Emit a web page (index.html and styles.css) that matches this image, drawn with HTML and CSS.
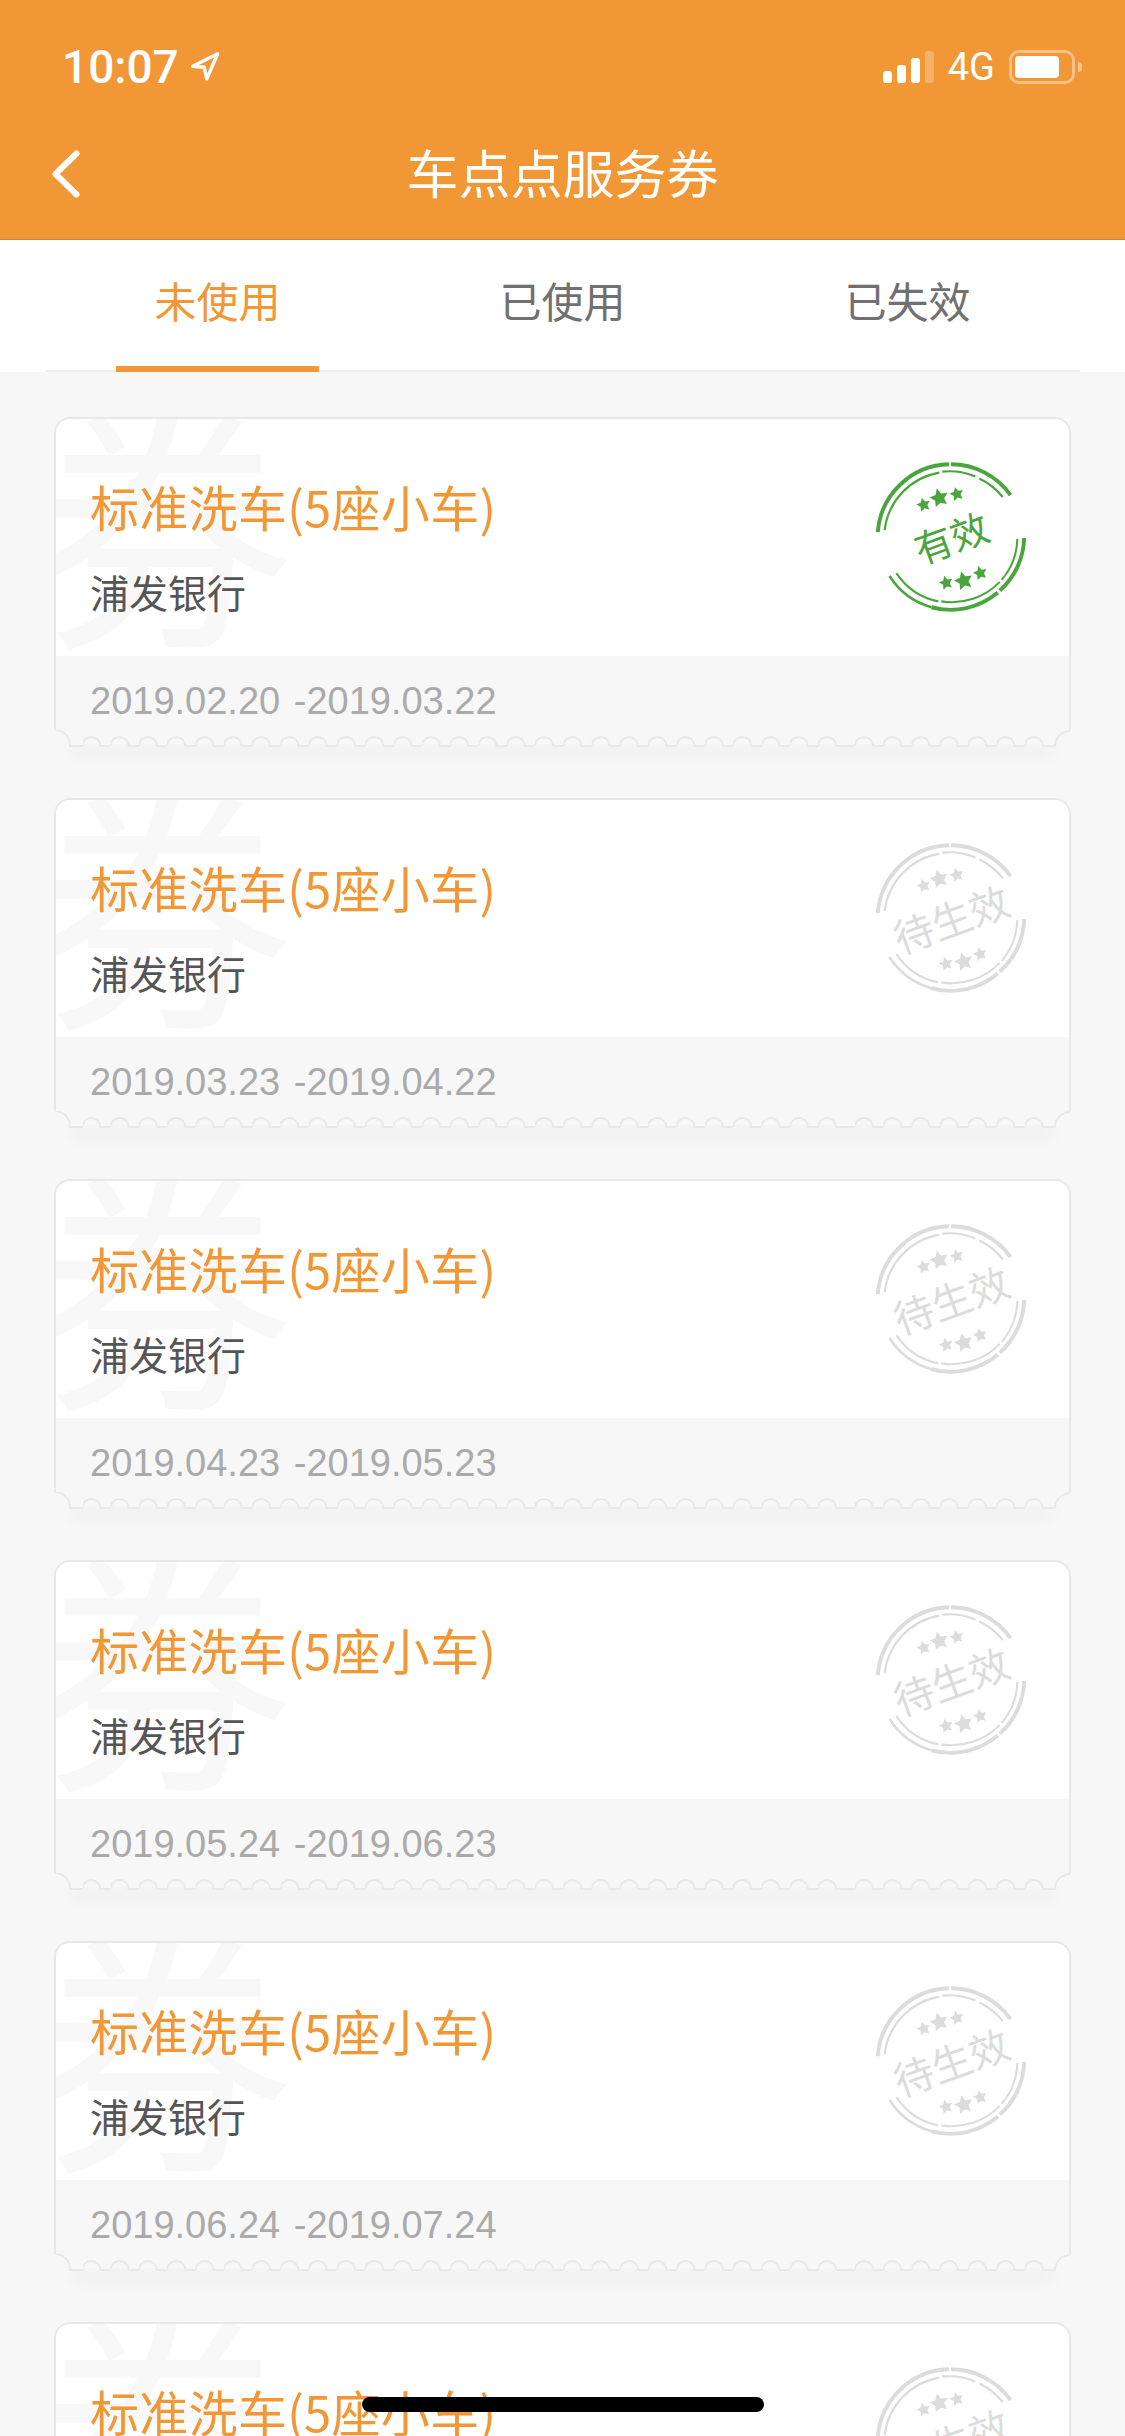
FILE: index.html
```html
<!DOCTYPE html>
<html lang="zh-CN">
<head>
    <meta charset="UTF-8">
    <meta name="viewport" content="width=device-width, initial-scale=1.0">
    <title>车点点服务券</title>
    <link rel="stylesheet" href="styles.css">
</head>
<body>
    <!-- shared drawings: card bottom edge and round stamp -->
    <svg class="defs" width="0" height="0" aria-hidden="true">
        <defs>
            <pattern id="tooth" patternUnits="userSpaceOnUse" width="28.3" height="18">
                <path d="M0 16A9 9 0 0 1 18 16H28.3V0H0Z" fill="#f7f7f7"/>
                <path d="M0 16A9 9 0 0 1 18 16H28.3" fill="none" stroke="#e8e8e8" stroke-width="2"/>
            </pattern>
            <polygon id="star" points="0,-1 .294,-.405 .951,-.309 .476,.155 .588,.809 0,.5 -.588,.809 -.476,.155 -.951,-.309 -.294,-.405"/>
            <symbol id="edge" viewBox="0 0 1017 18">
                <path d="M0 0H2A14 14 0 0 1 16 16H29V0Z" fill="#f7f7f7"/>
                <path d="M1 0A15 15 0 0 1 16 15V16H29" fill="none" stroke="#e8e8e8" stroke-width="2"/>
                <rect x="29" y="0" width="757" height="18" fill="url(#tooth)"/>
                <path d="M786 0H801V16H786Z" fill="#f7f7f7"/>
                <path d="M786 16H801" stroke="#e8e8e8" stroke-width="2"/>
                <g transform="translate(801 0)"><rect width="198.1" height="18" fill="url(#tooth)"/></g>
                <path d="M999 0H1017L1001 16H999Z" fill="#f7f7f7"/>
                <path d="M999 16H1001A15 15 0 0 1 1016 1" fill="none" stroke="#e8e8e8" stroke-width="2"/>
            </symbol>
            <symbol id="stamp" viewBox="-82 -82 164 164">
                <g fill="none" stroke="currentColor">
                    <path stroke-width="4" d="M-75 -5A75 75 0 0 1 -2 -74.500M0 -74.500A75 75 0 0 1 61 -43"/>
                    <path stroke-width="4" d="M75 1A75 75 0 0 1 50 55M48 57A75 75 0 0 1 -20 72"/>
                    <path stroke-width="2.600" d="M-20 72A75 75 0 0 1 -63 40"/>
                    <path stroke-width="2.200" d="M-68 -7A68 68 0 0 1 -12 -66M-9 -67A68 68 0 0 1 25 -62M29 -60A68 68 0 0 1 53 -41"/>
                    <path stroke-width="2.200" d="M68 2A68 68 0 0 1 52 44M50 46A68 68 0 0 1 -10 66M-13 66A68 68 0 0 1 -56 37"/>
                </g>
                <g fill="currentColor">
                    <use href="#star" transform="translate(-28 -33) rotate(-15) scale(7.500)"/>
                    <use href="#star" transform="translate(-12 -40) rotate(-15) scale(10)"/>
                    <use href="#star" transform="translate(6 -44) rotate(-15) scale(7.500)"/>
                    <use href="#star" transform="translate(-5 47) rotate(-15) scale(7.500)"/>
                    <use href="#star" transform="translate(13 45) rotate(-15) scale(10)"/>
                    <use href="#star" transform="translate(30 37) rotate(-15) scale(7.500)"/>
                </g>
            </symbol>
        </defs>
    </svg>

    <header class="app-header">
        <div class="status-bar">
            <div class="status-left">
                <span class="time">10:07</span>
                <svg class="location" viewBox="0 0 30 32"><path d="M27.700 2.700L2.700 15.300L14.300 16.300L16.700 28Z" fill="none" stroke="#fff" stroke-width="3.400" stroke-linejoin="round"/></svg>
            </div>
            <div class="status-right">
                <div class="signal">
                    <i class="bar bar-1"></i>
                    <i class="bar bar-2"></i>
                    <i class="bar bar-3"></i>
                    <i class="bar bar-4"></i>
                </div>
                <span class="network">4G</span>
                <div class="battery"><i class="battery-level"></i></div>
                <i class="battery-cap"></i>
            </div>
        </div>
        <nav class="nav-bar">
            <svg class="back" viewBox="0 0 28 48"><path d="M24.500 3.500L3.500 24L24.500 44.500" fill="none" stroke="#fff" stroke-width="6" stroke-linecap="round" stroke-linejoin="round"/></svg>
            <h1 class="nav-title">车点点服务券</h1>
        </nav>
    </header>

    <div class="tabs-wrap">
        <div class="tabs">
            <div class="tab active">未使用</div>
            <div class="tab">已使用</div>
            <div class="tab">已失效</div>
        </div>
    </div>

    <main class="coupon-list">
        <div class="coupon">
            <div class="coupon-body">
                <span class="watermark">券</span>
                <div class="coupon-info">
                    <div class="coupon-name">标准洗车(5座小车)</div>
                    <div class="coupon-bank">浦发银行</div>
                </div>
                <div class="stamp valid">
                    <svg class="stamp-ring"><use href="#stamp"/></svg>
                    <span class="stamp-text">有效</span>
                </div>
            </div>
            <div class="coupon-date">2019.02.20 -2019.03.22</div>
            <svg class="coupon-edge"><use href="#edge"/></svg>
        </div>

        <div class="coupon">
            <div class="coupon-body">
                <span class="watermark">券</span>
                <div class="coupon-info">
                    <div class="coupon-name">标准洗车(5座小车)</div>
                    <div class="coupon-bank">浦发银行</div>
                </div>
                <div class="stamp pending">
                    <svg class="stamp-ring"><use href="#stamp"/></svg>
                    <span class="stamp-text">待生效</span>
                </div>
            </div>
            <div class="coupon-date">2019.03.23 -2019.04.22</div>
            <svg class="coupon-edge"><use href="#edge"/></svg>
        </div>

        <div class="coupon">
            <div class="coupon-body">
                <span class="watermark">券</span>
                <div class="coupon-info">
                    <div class="coupon-name">标准洗车(5座小车)</div>
                    <div class="coupon-bank">浦发银行</div>
                </div>
                <div class="stamp pending">
                    <svg class="stamp-ring"><use href="#stamp"/></svg>
                    <span class="stamp-text">待生效</span>
                </div>
            </div>
            <div class="coupon-date">2019.04.23 -2019.05.23</div>
            <svg class="coupon-edge"><use href="#edge"/></svg>
        </div>

        <div class="coupon">
            <div class="coupon-body">
                <span class="watermark">券</span>
                <div class="coupon-info">
                    <div class="coupon-name">标准洗车(5座小车)</div>
                    <div class="coupon-bank">浦发银行</div>
                </div>
                <div class="stamp pending">
                    <svg class="stamp-ring"><use href="#stamp"/></svg>
                    <span class="stamp-text">待生效</span>
                </div>
            </div>
            <div class="coupon-date">2019.05.24 -2019.06.23</div>
            <svg class="coupon-edge"><use href="#edge"/></svg>
        </div>

        <div class="coupon">
            <div class="coupon-body">
                <span class="watermark">券</span>
                <div class="coupon-info">
                    <div class="coupon-name">标准洗车(5座小车)</div>
                    <div class="coupon-bank">浦发银行</div>
                </div>
                <div class="stamp pending">
                    <svg class="stamp-ring"><use href="#stamp"/></svg>
                    <span class="stamp-text">待生效</span>
                </div>
            </div>
            <div class="coupon-date">2019.06.24 -2019.07.24</div>
            <svg class="coupon-edge"><use href="#edge"/></svg>
        </div>

        <div class="coupon">
            <div class="coupon-body">
                <span class="watermark">券</span>
                <div class="coupon-info">
                    <div class="coupon-name">标准洗车(5座小车)</div>
                </div>
                <div class="stamp pending">
                    <svg class="stamp-ring"><use href="#stamp"/></svg>
                    <span class="stamp-text">待生效</span>
                </div>
            </div>
        </div>
    </main>

    <div class="home-indicator"></div>
</body>
</html>
```

FILE: styles.css
```css
html, body {
    height: 100%;
}

body {
    position: relative;
    margin: 0;
    padding: 0;
    overflow: hidden;
    background-color: #f7f7f7;
    font-family: "Noto Sans CJK SC", "Liberation Sans", sans-serif;
}

.defs {
    position: absolute;
}

/* Orange header */
.app-header {
    height: 239px;
    background-color: #f19736;
    border-bottom: 1px solid #d0832f;
    color: #fff;
}

.status-bar {
    height: 133px;
    display: flex;
    justify-content: space-between;
    align-items: center;
    padding: 0 43px 0 62px;
}

.status-left {
    display: flex;
    align-items: center;
    gap: 11px;
}

.time {
    font-family: Roboto, sans-serif;
    font-size: 46px;
    font-weight: 500;
    line-height: 54px;
}

.location {
    width: 30px;
    height: 32px;
}

.status-right {
    display: flex;
    align-items: center;
}

.signal {
    display: flex;
    align-items: flex-end;
    gap: 5px;
    height: 32px;
}

.bar {
    width: 9px;
    border-radius: 3px;
    background-color: #fff;
}

.bar-1 { height: 12px; }
.bar-2 { height: 18px; }
.bar-3 { height: 25px; }
.bar-4 { height: 32px; background-color: rgba(255, 255, 255, 0.25); }

.network {
    margin-left: 14px;
    font-family: Roboto, sans-serif;
    font-size: 38px;
    line-height: 40px;
}

.battery {
    box-sizing: border-box;
    width: 66px;
    height: 34px;
    margin-left: 14px;
    padding: 3px;
    border: 3px solid rgba(255, 255, 255, 0.4);
    border-radius: 10px;
}

.battery-level {
    display: block;
    width: 44px;
    height: 22px;
    border-radius: 4px;
    background-color: #fff;
}

.battery-cap {
    width: 4px;
    height: 10px;
    margin-left: 3px;
    border-radius: 0 5px 5px 0;
    background-color: rgba(255, 255, 255, 0.45);
}

.nav-bar {
    position: relative;
    height: 78px;
    display: flex;
    justify-content: center;
    align-items: center;
}

.back {
    position: absolute;
    left: 52px;
    top: 17px;
    width: 28px;
    height: 48px;
}

.nav-title {
    margin: 0;
    font-size: 52px;
    font-weight: 400;
    line-height: 78px;
}

/* Tabs */
.tabs-wrap {
    background-color: #fff;
}

.tabs {
    display: flex;
    height: 130px;
    margin: 0 45px;
    border-bottom: 2px solid #eeeeee;
}

.tab {
    position: relative;
    flex: 1;
    padding-top: 29px;
    text-align: center;
    font-size: 42px;
    line-height: 62px;
    color: #707070;
}

.tab.active {
    color: #f19736;
}

.tab.active::after {
    content: "";
    position: absolute;
    left: 71px;
    bottom: -2px;
    width: 203px;
    height: 6px;
    background-color: #f19736;
}

/* Coupon cards */
.coupon-list {
    display: flex;
    flex-direction: column;
    gap: 50px;
    padding: 45px 54px 0;
}

.coupon {
    position: relative;
    flex-shrink: 0;
    height: 331px;
    display: flex;
    flex-direction: column;
}

/* soft shadow under the toothed edge */
.coupon::after {
    content: "";
    position: absolute;
    left: 16px;
    right: 16px;
    bottom: 4px;
    height: 4px;
    box-shadow: 0 10px 16px rgba(0, 0, 0, 0.09);
    z-index: 0;
}

.coupon-body {
    position: relative;
    box-sizing: border-box;
    height: 240px;
    display: flex;
    justify-content: space-between;
    align-items: flex-start;
    padding: 0 38px 0 34px;
    overflow: hidden;
    background-color: #fff;
    border: 2px solid #e8e8e8;
    border-bottom: 0;
    border-radius: 16px 16px 0 0;
}

.watermark {
    position: absolute;
    left: -24px;
    top: -74px;
    font-size: 262px;
    line-height: 340px;
    color: #f8f8f8;
}

.coupon-info {
    position: relative;
    padding-top: 51px;
}

.coupon-name {
    font-size: 49px;
    line-height: 72px;
    letter-spacing: 0.3px;
    color: #f19736;
}

.coupon-bank {
    margin-top: 21px;
    font-size: 39px;
    line-height: 56px;
    color: #555;
}

.stamp {
    position: relative;
    width: 160px;
    height: 160px;
    margin-top: 38px;
    display: flex;
    justify-content: center;
    align-items: center;
}

.stamp.valid {
    color: #4aa63c;
}

.stamp.pending {
    color: #dcdcdc;
}

.stamp-ring {
    position: absolute;
    left: 0;
    top: 0;
    width: 160px;
    height: 160px;
}

.stamp-text {
    font-size: 38px;
    line-height: 44px;
    white-space: nowrap;
    transform: rotate(-20deg);
}

.stamp.pending .stamp-text {
    font-size: 40px;
}

.coupon-date {
    position: relative;
    z-index: 1;
    box-sizing: border-box;
    height: 74px;
    padding: 20px 0 0 34px;
    background-color: #f7f7f7;
    border-left: 2px solid #e8e8e8;
    border-right: 2px solid #e8e8e8;
    font-family: "Liberation Sans", sans-serif;
    font-size: 38px;
    line-height: 50px;
    word-spacing: 3px;
    color: #aaa;
}

.coupon-edge {
    position: relative;
    z-index: 1;
    display: block;
    width: 1017px;
    height: 18px;
    flex-shrink: 0;
}

.home-indicator {
    position: absolute;
    left: 362px;
    top: 2397px;
    width: 402px;
    height: 15px;
    border-radius: 8px;
    background-color: #000;
}
```
